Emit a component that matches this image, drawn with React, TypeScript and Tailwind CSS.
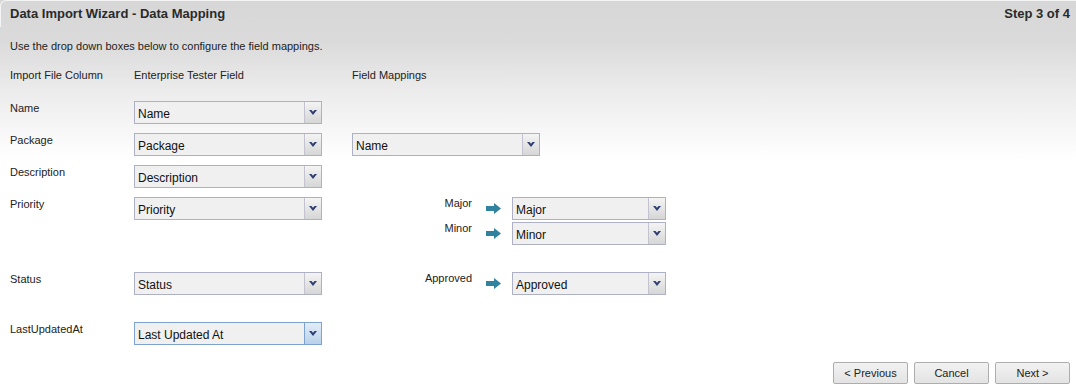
import React from 'react';

const Chevron = ({ focused }: { focused?: boolean }) => (
    <span
        className={
            'flex w-[17px] items-center justify-center border-l ' +
            (focused
                ? 'border-[#7da2ce] bg-[linear-gradient(#e2edf8,#b9d1ea)]'
                : 'border-[#c3c3cf] bg-[linear-gradient(#f4f4f4,#d6d6d6)]')
        }
    >
        <svg width="8" height="5" viewBox="0 0 8 5">
            <path d="M0 0 H2.5 L4 1.8 L5.5 0 H8 L4 5 Z" fill="#2d3f73" />
        </svg>
    </span>
);

const Select = ({ value, width, focused }: { value: string; width: string; focused?: boolean }) => (
    <div
        className={
            'flex h-[23px] border bg-[#f0f0f0] ' +
            width +
            ' ' +
            (focused ? 'border-[#7da2ce]' : 'border-[#aeb1c4]')
        }
    >
        <span className="flex-1 pl-[3px] pt-[5px] text-[12px] leading-[14px] text-[#111]">{value}</span>
        <Chevron focused={focused} />
    </div>
);

const Arrow = () => (
    <svg width="15" height="11" viewBox="0 0 15 11">
        <path d="M0 3 H8 V0 L15 5.5 L8 11 V8 H0 Z" fill="#31829f" />
    </svg>
);

const Label = ({ children }: { children: React.ReactNode }) => (
    <span className="pt-[1px] text-[11px] leading-[13px] text-[#222]">{children}</span>
);

const Mapping = ({ label, value }: { label: string; value: string }) => (
    <div className="flex h-[25px]">
        <span className="w-[122px] pr-[2px] text-right text-[11px] leading-[13px] text-[#222]">{label}</span>
        <span className="ml-[12px] w-[26px] pt-[6px]">
            <Arrow />
        </span>
        <Select value={value} width="w-[154px]" />
    </div>
);

export default function App() {
    return (
        <div
            className="relative h-[388px] w-[1076px] overflow-hidden bg-[linear-gradient(#d7d7d7,#dadada_40px,#ededed_95px,#ffffff_160px)] text-[#222]"
            style={{ fontFamily: '"Liberation Sans", Arial, sans-serif' }}
        >
            {/* header */}
            <div className="flex h-[27px] items-center justify-between rounded-tl-[6px] border-t border-l border-[#f4f4f4] pl-[9px] pr-[6px]">
                <span className="text-[13px] font-bold text-[#2a2a2a]">Data Import Wizard - Data Mapping</span>
                <span className="text-[13px] font-bold text-[#2a2a2a]">Step 3 of 4</span>
            </div>

            <div className="pl-[10px]">
                <p className="mt-[13px] text-[11px] leading-[13px]">Use the drop down boxes below to configure the field mappings.</p>

                <div className="mt-[16px] grid grid-cols-[124px_218px_1fr] text-[11px] leading-[13px]">
                    <span>Import File Column</span>
                    <span>Enterprise Tester Field</span>
                    <span>Field Mappings</span>
                </div>

                <div className="mt-[19px] flex flex-col">
                    <div className="grid h-[32px] grid-cols-[124px_218px_1fr]">
                        <Label>Name</Label>
                        <Select value="Name" width="w-[188px]" />
                    </div>
                    <div className="grid h-[32px] grid-cols-[124px_218px_1fr]">
                        <Label>Package</Label>
                        <Select value="Package" width="w-[188px]" />
                        <Select value="Name" width="w-[188px]" />
                    </div>
                    <div className="grid h-[32px] grid-cols-[124px_218px_1fr]">
                        <Label>Description</Label>
                        <Select value="Description" width="w-[188px]" />
                    </div>
                    <div className="grid h-[75px] grid-cols-[124px_218px_1fr]">
                        <Label>Priority</Label>
                        <Select value="Priority" width="w-[188px]" />
                        <div className="flex flex-col">
                            <Mapping label="Major" value="Major" />
                            <Mapping label="Minor" value="Minor" />
                        </div>
                    </div>
                    <div className="grid h-[50px] grid-cols-[124px_218px_1fr]">
                        <Label>Status</Label>
                        <Select value="Status" width="w-[188px]" />
                        <div>
                            <Mapping label="Approved" value="Approved" />
                        </div>
                    </div>
                    <div className="grid h-[32px] grid-cols-[124px_218px_1fr]">
                        <Label>LastUpdatedAt</Label>
                        <Select value="Last Updated At" width="w-[188px]" focused />
                    </div>
                </div>
            </div>

            {/* buttons */}
            <div className="mt-[8px] flex justify-end gap-[6px] pr-[6px]">
                {['< Previous', 'Cancel', 'Next >'].map((b) => (
                    <button
                        key={b}
                        className="h-[22px] w-[75px] rounded-[2px] border border-[#adadad] bg-[linear-gradient(#f2f2f2,#e3e3e3)] text-[11px] text-[#222]"
                        style={{ fontFamily: 'Arial, "Liberation Sans", sans-serif' }}
                    >
                        {b}
                    </button>
                ))}
            </div>
        </div>
    );
}
